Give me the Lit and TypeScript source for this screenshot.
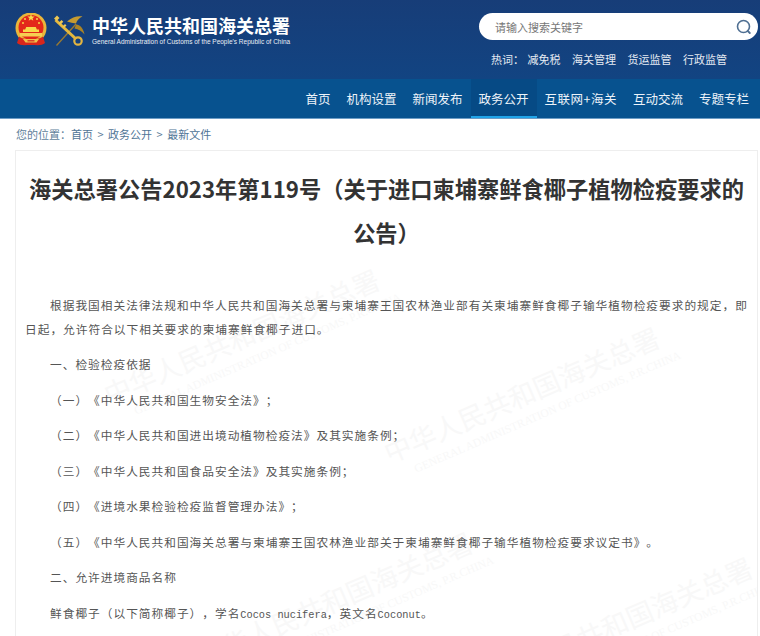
import { LitElement, html, css, svg } from "lit";
import { customElement } from "lit/decorators.js";

const NAV = ["首页", "机构设置", "新闻发布", "政务公开", "互联网+海关", "互动交流", "专题专栏"];
const HOT = ["减免税", "海关管理", "货运监管", "行政监管"];
const PARAS = [
  "根据我国相关法律法规和中华人民共和国海关总署与柬埔寨王国农林渔业部有关柬埔寨鲜食椰子输华植物检疫要求的规定，即日起，允许符合以下相关要求的柬埔寨鲜食椰子进口。",
  "一、检验检疫依据",
  "（一）《中华人民共和国生物安全法》；",
  "（二）《中华人民共和国进出境动植物检疫法》及其实施条例；",
  "（三）《中华人民共和国食品安全法》及其实施条例；",
  "（四）《进境水果检验检疫监督管理办法》；",
  "（五）《中华人民共和国海关总署与柬埔寨王国农林渔业部关于柬埔寨鲜食椰子输华植物检疫要求议定书》。",
  "二、允许进境商品名称",
  html`鲜食椰子（以下简称椰子），学名<span class="latin">Cocos nucifera</span>，英文名<span class="latin">Coconut</span>。`,
];
const MARKS = [
  [82, 228],
  [362, 286],
  [175, 491],
  [455, 516],
];

const emblem = svg`<svg class="emblem" width="32" height="34" viewBox="0 0 32 34">
  <circle cx="16" cy="15" r="15.500" fill="#eab63a"/>
  <circle cx="16" cy="14.500" r="12.500" fill="#e3281b"/>
  <path d="M15 3.500l1-2.600 1 2.600 2.600.1-2 1.600.7 2.500L16 6.300l-2.300 1.400.7-2.500-2-1.600z" fill="#f8d94a"/>
  <g fill="#f8d94a"><circle cx="10" cy="6" r="1"/><circle cx="22" cy="6" r="1"/><circle cx="8" cy="10" r="1"/><circle cx="24" cy="10" r="1"/></g>
  <path d="M8 19v-2.400h2.200l1-2.600h9.600l1 2.600H24V19z" fill="#f8d94a"/>
  <rect x="5" y="20" width="22" height="3.500" fill="#f6cf52"/>
  <path d="M4 23.500c3 2.500 7 2.500 12 2.500s9 0 12-2.500l2 6.500c-3 3-8 2-14 2s-11 1-14-2z" fill="#d8261c"/>
  <path d="M8 26h16l-2.500 3.500h-11z" fill="#efc24b"/>
  <path d="M12.500 27.200h7v1.200h-7z" fill="#d8261c"/>
</svg>`;

const customs = svg`<svg class="customs" width="33" height="33" viewBox="0 0 33 33" fill="none">
  <path d="M3.500 30.500L23 9" stroke="#9a7a32" stroke-width="1.300"/>
  <path d="M14 6.500C19 2 25 .5 29.500 1.500 26 3 24 5.500 23 8.500c-3-.5-6-1-9-2z" fill="#c59a30"/>
  <path d="M23 9.500c4 0 7.500 4 8.500 10-2.500-3.500-6-5.500-10-6z" fill="#ab8426"/>
  <path d="M2.500 5L23 24" stroke="#e4b83e" stroke-width="3"/>
  <path d="M1 3.500L4 .5l2.500 2.500-3 3zM5.500 8l3-3 1.800 1.800-3 3zM9.500 11.500l2.500-2.500 1.500 1.500-2.500 2.500z" fill="#ecc654"/>
  <circle cx="25" cy="26" r="3.700" stroke="#e3b540" stroke-width="2.200"/>
</svg>`;

@customElement("app-root")
export class AppRoot extends LitElement {
  static styles = css`
    :host {
      display: block;
      width: 760px;
      height: 636px;
      overflow: hidden;
      background: #fff;
      font-family: "Noto Sans CJK SC", sans-serif;
    }
    .top {
      height: 79px;
      background: linear-gradient(180deg, #173d78 0%, #124482 100%);
      display: flex;
      justify-content: space-between;
      box-sizing: border-box;
      padding: 13px 2px 0 15px;
    }
    .brand {
      display: flex;
      align-items: flex-start;
      color: #fff;
    }
    .emblem { display: block; }
    .customs { display: block; margin: 2px 0 0 6px; }
    .names { margin-left: 6px; }
    .cn {
      font-size: 18px;
      line-height: 24px;
      font-weight: 700;
      white-space: nowrap;
    }
    .en {
      font-family: "Liberation Sans", sans-serif;
      font-size: 6.500px;
      line-height: 8px;
      margin-top: 1px;
      white-space: nowrap;
      color: #e9eef6;
    }
    .side { width: 279px; }
    .search {
      height: 27px;
      border-radius: 14px;
      background: #fff;
      display: flex;
      align-items: center;
      justify-content: space-between;
      box-sizing: border-box;
      padding: 0 4px 0 16px;
      font-size: 11px;
      color: #777;
    }
    .search svg { display: block; }
    .hot {
      display: flex;
      gap: 11.500px;
      margin: 11px 0 0 12px;
      font-size: 11px;
      line-height: 16px;
      color: #e6ebf3;
      white-space: nowrap;
    }
    .hot .label { width: 25px; }
    .nav {
      height: 39px;
      background: #07528f;
      border-bottom: 1px solid #6d9dc6;
      display: flex;
      justify-content: flex-end;
      padding-right: 3px;
    }
    .nav a {
      padding: 0 8px;
      line-height: 40px;
      font-size: 12.500px;
      color: #edf3f9;
      white-space: nowrap;
    }
    .nav a.wide { letter-spacing: 0.500px; }
    .nav a.on { background: #064a85; box-shadow: inset 0 -2px 0 #1fa3e8; }
    .crumb {
      height: 29px;
      padding-bottom: 2px;
      display: flex;
      align-items: center;
      gap: 4.500px;
      padding-left: 16px;
      font-size: 11px;
      color: #5f7f9b;
      white-space: nowrap;
    }
    .crumb .label { margin-right: -4.500px; }
    .crumb a { color: #4f7596; }
    .card {
      position: relative;
      margin-left: 15px;
      width: 743px;
      height: 600px;
      box-sizing: border-box;
      border: 1px solid #eeeeee;
      border-bottom: 0;
      padding: 15px 3px 0 9px;
      overflow: hidden;
    }
    h1 {
      margin: 0 6px 39px 0;
      text-align: center;
      font-size: 22.250px;
      line-height: 44px;
      font-weight: 700;
      color: #333;
    }
    .body { position: relative; z-index: 1; }
    p {
      margin: 0 0 11.450px;
      font-family: "Noto Sans CJK SC", sans-serif;
      font-size: 11.700px;
      line-height: 24px;
      letter-spacing: 1px;
      text-indent: 25px;
      color: #555;
      text-spacing-trim: space-all;
    }
    .latin {
      font-family: "Liberation Mono", monospace;
      font-size: 10.300px;
      letter-spacing: 0;
    }
    .mark {
      position: absolute;
      transform: rotate(-23.400deg);
      transform-origin: left top;
      color: #f8f8f8;
      white-space: nowrap;
    }
    .mark b {
      display: block;
      font-size: 27px;
      line-height: 36px;
      font-weight: 400;
    }
    .mark i {
      display: block;
      font-family: "Liberation Serif", serif;
      font-style: normal;
      font-size: 11.500px;
      line-height: 16px;
      margin-left: 21px;
    }
  `;

  render() {
    return html`
      <div class="top">
        <div class="brand">
          ${emblem}${customs}
          <div class="names">
            <div class="cn">中华人民共和国海关总署</div>
            <div class="en">General Administration of Customs of the People's Republic of China</div>
          </div>
        </div>
        <div class="side">
          <div class="search">
            <span>请输入搜索关键字</span>
            <svg width="20" height="20" viewBox="0 0 20 20" fill="none">
              <circle cx="9.500" cy="9.500" r="6" stroke="#4f6f92" stroke-width="1.600"/>
              <path d="M13.800 14l2 2" stroke="#4f6f92" stroke-width="1.800" stroke-linecap="round"/>
            </svg>
          </div>
          <div class="hot">
            <span class="label">热词：</span>
            ${HOT.map((h) => html`<span>${h}</span>`)}
          </div>
        </div>
      </div>
      <nav class="nav">
        ${NAV.map(
          (n) =>
            html`<a class="${n === "政务公开" ? "on" : ""} ${n.includes("+") ? "wide" : ""}">${n}</a>`
        )}
      </nav>
      <div class="crumb">
        <span class="label">您的位置：</span><a>首页</a><span>&gt;</span><a>政务公开</a><span>&gt;</span><a>最新文件</a>
      </div>
      <article class="card">
        ${MARKS.map(
          ([x, y]) => html`<div class="mark" style="left:${x}px;top:${y}px">
            <b>中华人民共和国海关总署</b>
            <i>GENERAL ADMINISTRATION OF CUSTOMS, P.R.CHINA</i>
          </div>`
        )}
        <div class="body">
          <h1>海关总署公告2023年第119号（关于进口柬埔寨鲜食椰子植物检疫要求的公告）</h1>
          ${PARAS.map((p) => html`<p>${p}</p>`)}
        </div>
      </article>
    `;
  }
}
